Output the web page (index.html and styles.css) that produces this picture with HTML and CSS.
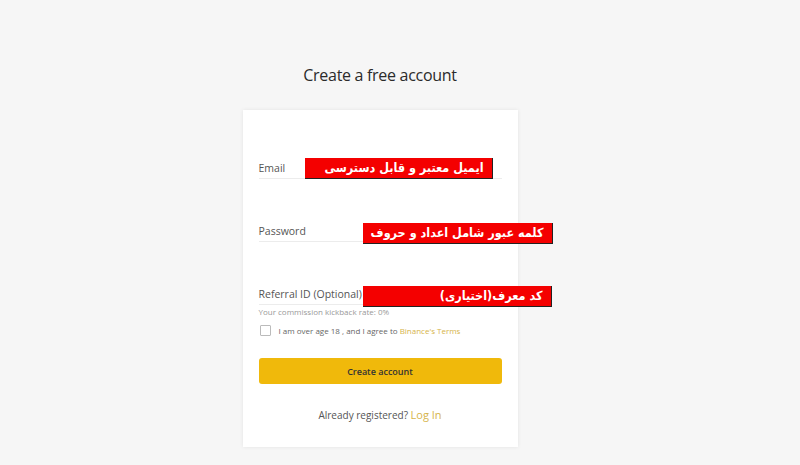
FILE: index.html
```html
<!DOCTYPE html>
<html lang="en">
<head>
<meta charset="UTF-8">
<meta name="viewport" content="width=device-width, initial-scale=1.0">
<title>Create a free account</title>
<link rel="stylesheet" href="styles.css">
</head>
<body>
<div class="page">
    <h1 class="title">Create a free account</h1>
    <div class="card">
        <div class="field field-email">
            <span class="label">Email</span>
            <span class="note note-email" dir="rtl">ایمیل معتبر و قابل دسترسی</span>
        </div>
        <div class="field field-password">
            <span class="label">Password</span>
            <span class="note note-password" dir="rtl">کلمه عبور شامل اعداد و حروف</span>
        </div>
        <div class="field field-referral">
            <span class="label">Referral ID (Optional)</span>
            <span class="note note-referral" dir="rtl">کد معرف(اختیاری)</span>
        </div>
        <div class="hint">Your commission kickback rate: 0%</div>
        <label class="agree">
            <span class="box"></span>
            <span>I am over age 18 , and I agree to <span class="link">Binance's Terms</span></span>
        </label>
        <button class="submit">Create account</button>
        <div class="login">Already registered? <span class="link">Log In</span></div>
    </div>
</div>
</body>
</html>
```
FILE: styles.css
```css
body {
    margin: 0;
    padding: 0;
    background-color: #f6f6f6;
    font-family: "Open Sans", Arial, sans-serif;
    color: #333;
}

.page {
    display: flex;
    flex-direction: column;
    align-items: center;
    padding-top: 63px;
    padding-right: 40px;
    height: 465px;
    box-sizing: border-box;
}

.title {
    margin: 0;
    font-size: 16px;
    font-weight: 400;
    letter-spacing: -0.3px;
    line-height: 24px;
    color: #2b2b2b;
}

.card {
    margin-top: 23px;
    width: 275px;
    height: 337px;
    box-sizing: border-box;
    padding: 48px 16px 0;
    background-color: #fff;
    box-shadow: 0 0 4px rgba(0, 0, 0, 0.08);
}

.field {
    position: relative;
    height: 20px;
    border-bottom: 1px solid #ececec;
    display: flex;
    align-items: center;
}

.field + .field {
    margin-top: 42px;
}

.label {
    font-size: 10.5px;
    color: #555;
}

.note {
    position: absolute;
    top: 0;
    height: 21px;
    box-sizing: border-box;
    padding: 0 8px;
    background-color: #f40000;
    border-right: 1px solid #222;
    border-bottom: 1px solid #222;
    color: #fff;
    font-family: "DejaVu Sans Condensed", "DejaVu Sans", sans-serif;
    font-weight: bold;
    font-size: 12.5px;
    line-height: 20px;
    white-space: nowrap;
    text-align: right;
}

.note-email {
    left: 46px;
    width: 188px;
}

.note-password {
    left: 104px;
    width: 190px;
    top: 2px;
}

.note-referral {
    left: 104px;
    width: 189px;
    top: 2px;
}

.hint {
    margin-top: 1px;
    font-size: 8px;
    color: #999;
}

.agree {
    margin-top: 8px;
    display: flex;
    align-items: center;
    gap: 8px;
    font-size: 8px;
    color: #666;
}

.box {
    width: 9px;
    height: 9px;
    border: 1px solid #bbb;
    border-radius: 1px;
    margin-left: 1px;
}

.link {
    color: #d6b44a;
}

.submit {
    display: block;
    margin-top: 22px;
    width: 100%;
    height: 26px;
    border: none;
    border-radius: 3px;
    background-color: #f0b90b;
    color: #333;
    font-family: "Open Sans", Arial, sans-serif;
    font-size: 9px;
    font-weight: 600;
    cursor: pointer;
}

.login {
    margin-top: 23px;
    text-align: center;
    font-size: 10px;
    color: #555;
}

.login .link {
    font-size: 11px;
}
```
